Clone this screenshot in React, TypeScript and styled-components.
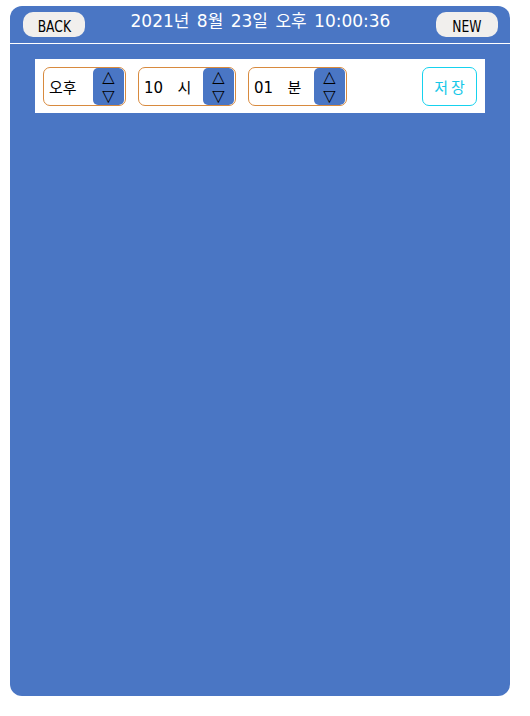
import React from 'react';
import styled, { createGlobalStyle } from 'styled-components';

const GlobalStyle = createGlobalStyle`
  html, body {
    margin: 0;
    padding: 0;
    background: #ffffff;
    font-family: "Noto Sans CJK KR", "DejaVu Sans", sans-serif;
  }
`;

const Panel = styled.div`
  width: 500px;
  height: 690px;
  margin: 6px 0 0 10px;
  background: #4a76c4;
  border-radius: 12px;
  overflow: hidden;
`;

const Header = styled.div`
  height: 38px;
  padding: 6px 12px 0 13px;
  box-sizing: border-box;
  display: flex;
  align-items: flex-start;
  justify-content: space-between;
  border-bottom: 1px solid #ffffff;
  margin-bottom: 15px;
`;

const NavButton = styled.button`
  width: 62px;
  height: 25px;
  border: none;
  border-radius: 10px;
  background: #f1efed;
  color: #000;
  padding: 4px 0 0 0;
  cursor: pointer;
  display: flex;
  justify-content: center;
  align-items: center;
`;

const NavLabel = styled.span`
  display: inline-block;
  font-family: "DejaVu Sans", sans-serif;
  font-size: 15px;
  font-weight: 400;
  line-height: 18px;
  transform: scaleX(0.82);
`;

const Clock = styled.div`
  color: #ffffff;
  font-family: "DejaVu Sans", "Noto Sans CJK KR", sans-serif;
  font-size: 17px;
  line-height: 17px;
  padding-top: 1px;
  word-spacing: 2px;
`;

const Toolbar = styled.div`
  margin: 0 25px;
  height: 54px;
  background: #ffffff;
  display: flex;
  align-items: center;
  padding: 0 8px;
  box-sizing: border-box;
  gap: 12px;
`;

const Spinner = styled.div<{ $w: number }>`
  width: ${(p) => p.$w}px;
  height: 39px;
  box-sizing: border-box;
  border: 1px solid #d88a3e;
  border-radius: 7px;
  display: flex;
  align-items: stretch;
  overflow: hidden;
  background: #fff;
`;

const SpinValue = styled.div`
  flex: 1;
  display: flex;
  align-items: center;
  padding-left: 5px;
  font-family: "DejaVu Sans", "Noto Sans CJK KR", sans-serif;
  font-size: 15px;
  color: #000;
  white-space: pre;
`;

const Arrows = styled.div`
  width: 31px;
  background: #4a76c4;
  border-radius: 5px;
  margin: 0 1px 0 0;
  display: flex;
  flex-direction: column;
  align-items: center;
  justify-content: center;
  font-family: "DejaVu Sans", sans-serif;
  font-size: 16px;
  color: #000;
`;

const Arrow = styled.span`
  display: block;
  height: 19px;
  line-height: 19px;
`;

const SaveButton = styled.button`
  margin-left: auto;
  width: 55px;
  height: 39px;
  box-sizing: border-box;
  border: 1px solid #16d2ee;
  border-radius: 7px;
  background: #fff;
  color: #16c8e8;
  font-family: "Noto Sans CJK KR", sans-serif;
  font-size: 15px;
  letter-spacing: 3px;
  padding: 0 0 0 3px;
  cursor: pointer;
`;

const TimeSpinner: React.FC<{ value: string; width: number }> = ({ value, width }) => (
  <Spinner $w={width}>
    <SpinValue>{value}</SpinValue>
    <Arrows>
      <Arrow>△</Arrow>
      <Arrow>▽</Arrow>
    </Arrows>
  </Spinner>
);

export default function App() {
  return (
    <>
      <GlobalStyle />
      <Panel>
        <Header>
          <NavButton>
            <NavLabel>BACK</NavLabel>
          </NavButton>
          <Clock>2021년 8월 23일 오후 10:00:36</Clock>
          <NavButton>
            <NavLabel>NEW</NavLabel>
          </NavButton>
        </Header>
        <Toolbar>
          <TimeSpinner value="오후" width={83} />
          <TimeSpinner value="10   시" width={98} />
          <TimeSpinner value="01   분" width={99} />
          <SaveButton>저장</SaveButton>
        </Toolbar>
      </Panel>
    </>
  );
}
